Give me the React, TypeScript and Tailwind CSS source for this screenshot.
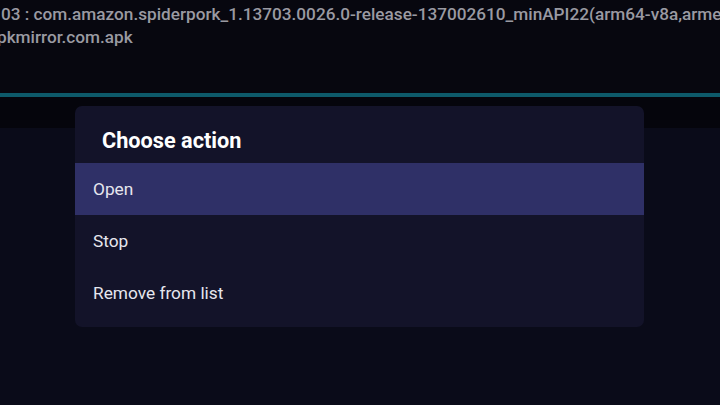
export default function App() {
  const font = { fontFamily: 'Roboto, "Noto Sans", sans-serif' };
  return (
    <div className="w-[720px] h-[405px] overflow-hidden bg-[#0a0b19] flex flex-col" style={font}>
      <div className="h-[93px] bg-[#07070f] pt-[3px] overflow-hidden">
        <div className="whitespace-nowrap text-[17.2px] leading-[23px] font-medium text-[#9a9aa2] ml-[1px]">
          03 : com.amazon.spiderpork_1.13703.0026.0-release-137002610_minAPI22(arm64-v8a,armeabi-v7a)(nodpi)_a
        </div>
        <div className="whitespace-nowrap text-[17.2px] leading-[23px] font-medium text-[#9a9aa2] ml-[-3px]">
          pkmirror.com.apk
        </div>
      </div>
      <div className="h-[4px] bg-[#0d5a6a]" />
      <div className="flex-1 flex flex-col relative">
        <div className="h-[31px] bg-[#05050c]" />
        <div className="absolute left-[75px] top-[9px] w-[569px] rounded-[7px] bg-[#131329] pb-[8px] flex flex-col">
          <div className="h-[57px] flex items-center pl-[27px] pt-[13px]">
            <span className="text-[21.7px] font-bold text-white">Choose action</span>
          </div>
          <div className="h-[52px] flex items-center pl-[18px] pt-[1px] bg-[#2f3067] text-[17.3px] text-[#e6e6ee]">Open</div>
          <div className="h-[52px] flex items-center pl-[18px] pt-[1px] text-[17.3px] text-[#e6e6ee]">Stop</div>
          <div className="h-[52px] flex items-center pl-[18px] pt-[1px] text-[17.3px] text-[#e6e6ee]">Remove from list</div>
        </div>
      </div>
    </div>
  );
}
